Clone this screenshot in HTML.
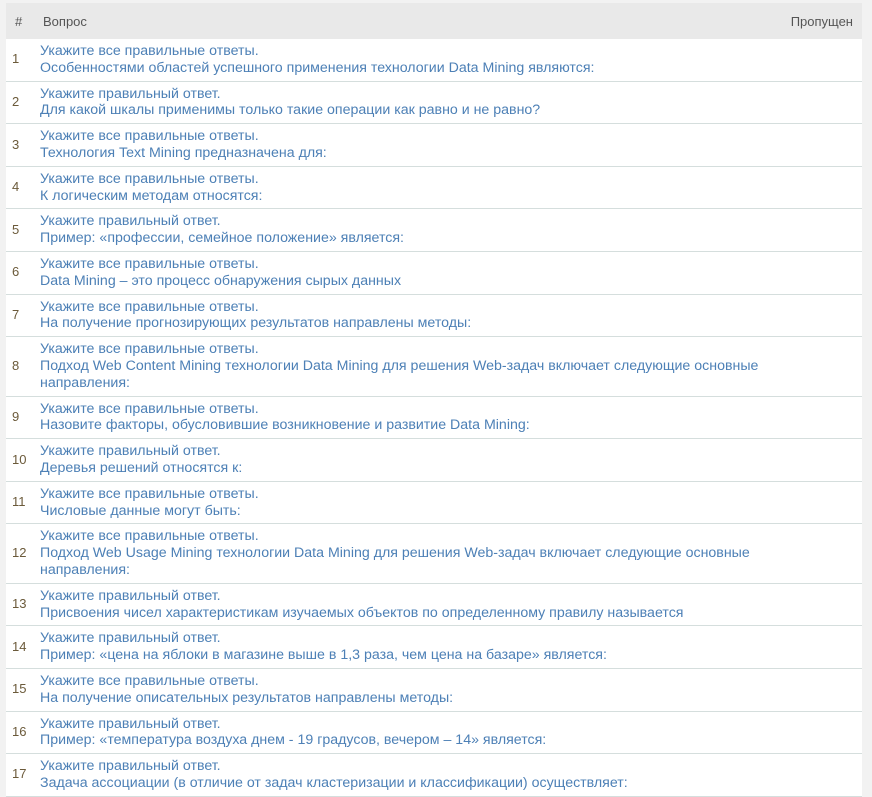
<!DOCTYPE html>
<html><head><meta charset="utf-8"><style>
html,body{margin:0;padding:0;background:#f2f2f2;width:872px;height:794px;overflow:hidden}
body{font-family:"Liberation Sans",sans-serif;font-size:14.2px}
.wrap{position:absolute;left:6px;top:3px;width:856px;background:#fff}
table{border-collapse:collapse;width:100%;table-layout:fixed}
th{background:#e9e9e9;font-weight:normal;color:#555;height:36px;text-align:left;padding:0;font-size:13px}
td{border-bottom:1px solid #d5dedd;padding:4px 0 4px 0;vertical-align:middle;line-height:16.8px;color:#4d80b6}
td.n{padding-left:6px;color:#6b5a3a;font-size:13px}
</style></head><body><div class="wrap"><table>
<colgroup><col style="width:34px"><col><col style="width:100px"></colgroup>
<tr><th style="padding-left:9px">#</th><th style="padding-left:3px">Вопрос</th><th style="text-align:right;padding-right:9px">Пропущен</th></tr>
<tr><td class="n">1</td><td colspan="2">Укажите все правильные ответы.<br>Особенностями областей успешного применения технологии Data Mining являются:</td></tr>
<tr><td class="n">2</td><td colspan="2">Укажите правильный ответ.<br>Для какой шкалы применимы только такие операции как равно и не равно?</td></tr>
<tr><td class="n">3</td><td colspan="2">Укажите все правильные ответы.<br>Технология Text Mining предназначена для:</td></tr>
<tr><td class="n">4</td><td colspan="2">Укажите все правильные ответы.<br>К логическим методам относятся:</td></tr>
<tr><td class="n">5</td><td colspan="2">Укажите правильный ответ.<br>Пример: «профессии, семейное положение» является:</td></tr>
<tr><td class="n">6</td><td colspan="2">Укажите все правильные ответы.<br>Data Mining – это процесс обнаружения сырых данных</td></tr>
<tr><td class="n">7</td><td colspan="2">Укажите все правильные ответы.<br>На получение прогнозирующих результатов направлены методы:</td></tr>
<tr><td class="n">8</td><td colspan="2">Укажите все правильные ответы.<br>Подход Web Content Mining технологии Data Mining для решения Web-задач включает следующие основные<br>направления:</td></tr>
<tr><td class="n">9</td><td colspan="2">Укажите все правильные ответы.<br>Назовите факторы, обусловившие возникновение и развитие Data Mining:</td></tr>
<tr><td class="n">10</td><td colspan="2">Укажите правильный ответ.<br>Деревья решений относятся к:</td></tr>
<tr><td class="n">11</td><td colspan="2">Укажите все правильные ответы.<br>Числовые данные могут быть:</td></tr>
<tr><td class="n">12</td><td colspan="2">Укажите все правильные ответы.<br>Подход Web Usage Mining технологии Data Mining для решения Web-задач включает следующие основные<br>направления:</td></tr>
<tr><td class="n">13</td><td colspan="2">Укажите правильный ответ.<br>Присвоения чисел характеристикам изучаемых объектов по определенному правилу называется</td></tr>
<tr><td class="n">14</td><td colspan="2">Укажите правильный ответ.<br>Пример: «цена на яблоки в магазине выше в 1,3 раза, чем цена на базаре» является:</td></tr>
<tr><td class="n">15</td><td colspan="2">Укажите все правильные ответы.<br>На получение описательных результатов направлены методы:</td></tr>
<tr><td class="n">16</td><td colspan="2">Укажите правильный ответ.<br>Пример: «температура воздуха днем - 19 градусов, вечером – 14» является:</td></tr>
<tr><td class="n">17</td><td colspan="2">Укажите правильный ответ.<br>Задача ассоциации (в отличие от задач кластеризации и классификации) осуществляет:</td></tr>
</table></div></body></html>
